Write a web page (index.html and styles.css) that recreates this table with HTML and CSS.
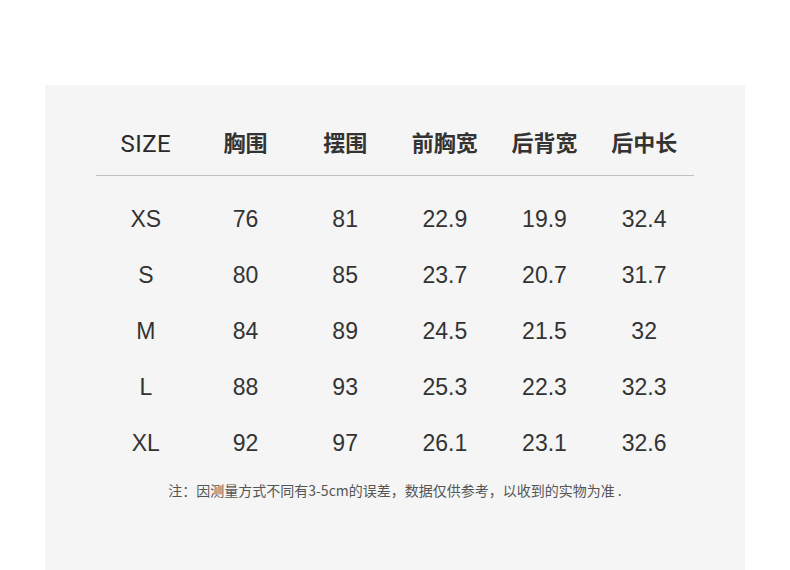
FILE: index.html
```html
<!DOCTYPE html>
<html lang="zh">
<head>
<meta charset="utf-8">
<link rel="stylesheet" href="styles.css">
</head>
<body>
<div class="panel">
  <div class="table">
    <div class="row head">
      <div class="cell latin">SIZE</div>
      <div class="cell">胸围</div>
      <div class="cell">摆围</div>
      <div class="cell">前胸宽</div>
      <div class="cell">后背宽</div>
      <div class="cell">后中长</div>
    </div>
    <div class="body">
      <div class="row"><div class="cell">XS</div><div class="cell">76</div><div class="cell">81</div><div class="cell">22.9</div><div class="cell">19.9</div><div class="cell">32.4</div></div>
      <div class="row"><div class="cell">S</div><div class="cell">80</div><div class="cell">85</div><div class="cell">23.7</div><div class="cell">20.7</div><div class="cell">31.7</div></div>
      <div class="row"><div class="cell">M</div><div class="cell">84</div><div class="cell">89</div><div class="cell">24.5</div><div class="cell">21.5</div><div class="cell">32</div></div>
      <div class="row"><div class="cell">L</div><div class="cell">88</div><div class="cell">93</div><div class="cell">25.3</div><div class="cell">22.3</div><div class="cell">32.3</div></div>
      <div class="row"><div class="cell">XL</div><div class="cell">92</div><div class="cell">97</div><div class="cell">26.1</div><div class="cell">23.1</div><div class="cell">32.6</div></div>
    </div>
  </div>
  <p class="note">注：因测量方式不同有3-5cm的误差，数据仅供参考，以收到的实物为准 .</p>
</div>
</body>
</html>
```
FILE: styles.css
```css
html, body {
  margin: 0;
  padding: 0;
  background: #ffffff;
}
.panel {
  margin: 85px 0 0 45px;
  width: 700px;
  height: 485px;
  background: #f5f5f5;
  padding-top: 38px;
  box-sizing: border-box;
}
.table {
  width: 598px;
  margin-left: 51px;
}
.row {
  display: grid;
  grid-template-columns: repeat(6, 1fr);
}
.cell {
  text-align: center;
}
.head {
  height: 53px;
  border-bottom: 1px solid #c2c2c2;
  box-sizing: border-box;
  font-family: "Noto Sans CJK SC", sans-serif;
  font-weight: 700;
  font-size: 22px;
  line-height: 36px;
  color: #333;
}
.head .latin {
  font-family: Roboto, "Noto Sans CJK SC", sans-serif;
  font-weight: 400;
  font-size: 24px;
  letter-spacing: 0.5px;
  color: #2a2a2a;
  padding-top: 3px;
}
.body {
  padding-top: 15px;
}
.body .row {
  height: 56px;
  line-height: 56px;
  font-family: "Liberation Sans", Arial, sans-serif;
  font-size: 23px;
  color: #333;
}
.note {
  margin: 9px 0 0;
  text-align: center;
  font-family: "Noto Sans CJK SC", sans-serif;
  font-size: 14px;
  line-height: 20px;
  color: #555;
}
```
